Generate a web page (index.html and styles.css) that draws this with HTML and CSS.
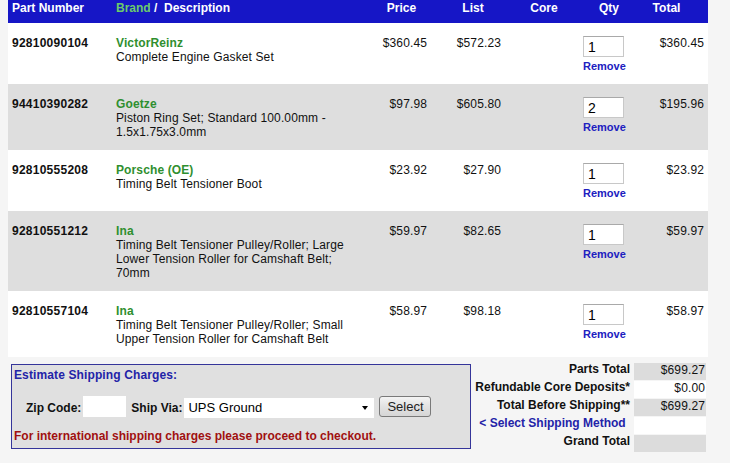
FILE: index.html
```html
<!DOCTYPE html>
<html>
<head>
<meta charset="utf-8">
<title>Shopping Cart</title>
<link rel="stylesheet" href="styles.css">
</head>
<body>
<div class="cart">
  <table class="items">
    <colgroup>
      <col class="c-part"><col class="c-desc"><col class="c-price"><col class="c-list"><col class="c-core"><col class="c-qty"><col class="c-total">
    </colgroup>
    <thead>
      <tr>
        <th class="h-part">Part Number</th>
        <th class="h-desc"><span class="h-brand">Brand</span> / &nbsp;Description</th>
        <th class="h-price">Price</th>
        <th class="h-list">List</th>
        <th class="h-core">Core</th>
        <th class="h-qty">Qty</th>
        <th class="h-total">Total</th>
      </tr>
    </thead>
    <tbody>
      <tr class="row-white">
        <td class="part">92810090104</td>
        <td class="desc"><div class="brand">VictorReinz</div><div>Complete Engine Gasket Set</div></td>
        <td class="price">$360.45</td>
        <td class="list">$572.23</td>
        <td class="core"></td>
        <td class="qty"><div class="qty-box"><input class="qty-input" type="text" value="1"><a class="remove" href="#">Remove</a></div></td>
        <td class="total">$360.45</td>
      </tr>
      <tr class="row-gray">
        <td class="part">94410390282</td>
        <td class="desc"><div class="brand">Goetze</div><div>Piston Ring Set; Standard 100.00mm - 1.5x1.75x3.0mm</div></td>
        <td class="price">$97.98</td>
        <td class="list">$605.80</td>
        <td class="core"></td>
        <td class="qty"><div class="qty-box"><input class="qty-input" type="text" value="2"><a class="remove" href="#">Remove</a></div></td>
        <td class="total">$195.96</td>
      </tr>
      <tr class="row-white">
        <td class="part">92810555208</td>
        <td class="desc"><div class="brand">Porsche (OE)</div><div>Timing Belt Tensioner Boot</div></td>
        <td class="price">$23.92</td>
        <td class="list">$27.90</td>
        <td class="core"></td>
        <td class="qty"><div class="qty-box"><input class="qty-input" type="text" value="1"><a class="remove" href="#">Remove</a></div></td>
        <td class="total">$23.92</td>
      </tr>
      <tr class="row-gray">
        <td class="part">92810551212</td>
        <td class="desc"><div class="brand">Ina</div><div>Timing Belt Tensioner Pulley/Roller; Large Lower Tension Roller for Camshaft Belt; 70mm</div></td>
        <td class="price">$59.97</td>
        <td class="list">$82.65</td>
        <td class="core"></td>
        <td class="qty"><div class="qty-box"><input class="qty-input" type="text" value="1"><a class="remove" href="#">Remove</a></div></td>
        <td class="total">$59.97</td>
      </tr>
      <tr class="row-white">
        <td class="part">92810557104</td>
        <td class="desc"><div class="brand">Ina</div><div>Timing Belt Tensioner Pulley/Roller; Small Upper Tension Roller for Camshaft Belt</div></td>
        <td class="price">$58.97</td>
        <td class="list">$98.18</td>
        <td class="core"></td>
        <td class="qty"><div class="qty-box"><input class="qty-input" type="text" value="1"><a class="remove" href="#">Remove</a></div></td>
        <td class="total">$58.97</td>
      </tr>
    </tbody>
  </table>

  <div class="bottom">
    <div class="ship">
      <div class="ship-title">Estimate Shipping Charges:</div>
      <div class="ship-form">
        <label class="ship-label">Zip Code:</label>
        <input class="zip" type="text">
        <label class="ship-label via">Ship Via:</label>
        <span class="select-wrap"><select class="ship-select"><option>UPS Ground</option></select></span>
        <button class="select-btn" type="button">Select</button>
      </div>
      <div class="ship-note">For international shipping charges please proceed to checkout.</div>
    </div>

    <div class="summary">
      <div class="s-label">Parts Total</div><div class="s-val gray">$699.27</div>
      <div class="s-label">Refundable Core Deposits*</div><div class="s-val white">$0.00</div>
      <div class="s-label">Total Before Shipping**</div><div class="s-val gray">$699.27</div>
      <div class="s-label link"><a href="#">&lt; Select Shipping Method</a></div><div class="s-val white"></div>
      <div class="s-label">Grand Total</div><div class="s-val gray"></div>
    </div>
  </div>
</div>
</body>
</html>
```

FILE: styles.css
```css
html, body {
  margin: 0;
  padding: 0;
}
body {
  background: #f5f5f5;
  font-family: "Liberation Sans", Arial, sans-serif;
  font-size: 12px;
  letter-spacing: 0.12px;
  color: #000;
}
.cart {
  width: 700px;
  margin-left: 8px;
}
.items {
  width: 700px;
  border-collapse: collapse;
  table-layout: fixed;
}
.c-part { width: 104px; }
.c-desc { width: 260px; }
.c-price { width: 69px; }
.c-list { width: 64px; }
.c-core { width: 78px; }
.c-qty { width: 46px; }
.c-total { width: 79px; }

.items thead tr {
  background: #1616c6;
  height: 23px;
}
.items th {
  color: #fff;
  font-weight: bold;
  font-size: 12px;
  line-height: 14px;
  letter-spacing: 0;
  vertical-align: top;
  padding: 1px 4px 8px;
  text-align: center;
  white-space: nowrap;
}
.items th.h-part, .items th.h-desc { text-align: left; }
.h-brand { color: #6bcb6b; }
.items th.h-price { padding-right: 14px; }
.items th.h-total { padding-right: 8px; }
.items th.h-qty { padding-left: 6px; padding-right: 0; }

.row-white { background: #fff; }
.row-gray { background: #dedede; }

.items td {
  vertical-align: top;
  padding: 13px 4px 11px;
  line-height: 14px;
  font-size: 12px;
  color: #111;
}
.items td.desc { padding-right: 22px; }
.items td.part { font-weight: bold; color: #111; letter-spacing: 0.25px; }
.brand { color: #2f8f2f; font-weight: bold; }
.items td.price { text-align: right; padding-right: 14px; }
.items td.list { text-align: right; }
.items td.total { text-align: right; }
.items td.qty { padding: 12px 0 11px; }

.qty-box {
  width: 41px;
  text-align: center;
}
.qty-input {
  display: block;
  box-sizing: border-box;
  width: 41px;
  height: 21px;
  margin: 1px 0 0;
  padding: 0 0 0 4px;
  border: 1px solid #c8c8c8;
  border-top-color: #a9a9a9;
  background: #fff;
  font-family: "Liberation Sans", Arial, sans-serif;
  font-size: 14px;
  color: #000;
  text-align: left;
}
.remove {
  display: block;
  margin-top: 3px;
  line-height: 13px;
  font-size: 11px;
  font-weight: bold;
  letter-spacing: 0;
  color: #2020c0;
  text-decoration: none;
}

.bottom {
  display: flex;
  align-items: flex-start;
}
.ship {
  box-sizing: border-box;
  width: 460px;
  height: 85px;
  margin: 7px 0 0 3px;
  border: 1px solid #35359a;
  background: #e0e0e0;
  padding: 3px 2px 0;
}
.ship-title {
  color: #2323a8;
  font-weight: bold;
  line-height: 14px;
}
.ship-form {
  display: flex;
  align-items: center;
  margin-top: 14px;
  padding-left: 12px;
  height: 21px;
}
.ship-label {
  font-weight: bold;
  color: #111;
  line-height: 14px;
  margin-top: 2px;
  letter-spacing: 0;
}
.zip {
  box-sizing: border-box;
  width: 43px;
  height: 21px;
  margin: 0 5px 0 2px;
  border: 1px solid #fff;
  background: #fff;
  padding: 0 2px;
  font-family: "Liberation Sans", Arial, sans-serif;
  font-size: 13px;
}
.select-wrap {
  position: relative;
  display: inline-block;
  margin-left: 2px;
  width: 190px;
  height: 20px;
  margin-top: 2px;
}
.select-wrap::after {
  content: "";
  position: absolute;
  right: 6px;
  top: 8px;
  border-left: 3px solid transparent;
  border-right: 3px solid transparent;
  border-top: 4px solid #000;
  pointer-events: none;
}
.ship-select {
  -webkit-appearance: none;
  appearance: none;
  box-sizing: border-box;
  width: 190px;
  height: 20px;
  border: 1px solid #fff;
  border-radius: 0;
  background: #fff;
  padding: 0 0 0 3px;
  font-family: "Liberation Sans", Arial, sans-serif;
  font-size: 13px;
  color: #000;
}
.select-btn {
  box-sizing: border-box;
  width: 52px;
  height: 21px;
  margin-left: 5px;
  margin-top: -1px;
  padding: 0;
  border: 1px solid #7a7a7a;
  border-radius: 3px;
  background: linear-gradient(#f4f4f4, #e2e2e2 50%, #d6d6d6);
  font-family: "Liberation Sans", Arial, sans-serif;
  font-size: 13px;
  color: #222;
}
.ship-note {
  margin-top: 12px;
  color: #a01010;
  font-weight: bold;
  line-height: 14px;
  letter-spacing: 0;
}

.summary {
  margin: 6px 2px 0 auto;
  display: grid;
  grid-template-columns: auto 72px;
  grid-auto-rows: 17px;
  column-gap: 4px;
  row-gap: 1px;
}
.s-label {
  font-weight: bold;
  text-align: right;
  line-height: 13px;
  color: #111;
  white-space: nowrap;
  letter-spacing: 0;
}
.s-label.link { text-align: left; padding-left: 4px; }
.s-label.link a {
  color: #2323a8;
  text-decoration: none;
}
.s-val {
  text-align: right;
  line-height: 14px;
  padding-right: 1px;
  color: #111;
}
.s-val.gray { background: #dcdcdc; }
.s-val.white { background: #fff; }
```
